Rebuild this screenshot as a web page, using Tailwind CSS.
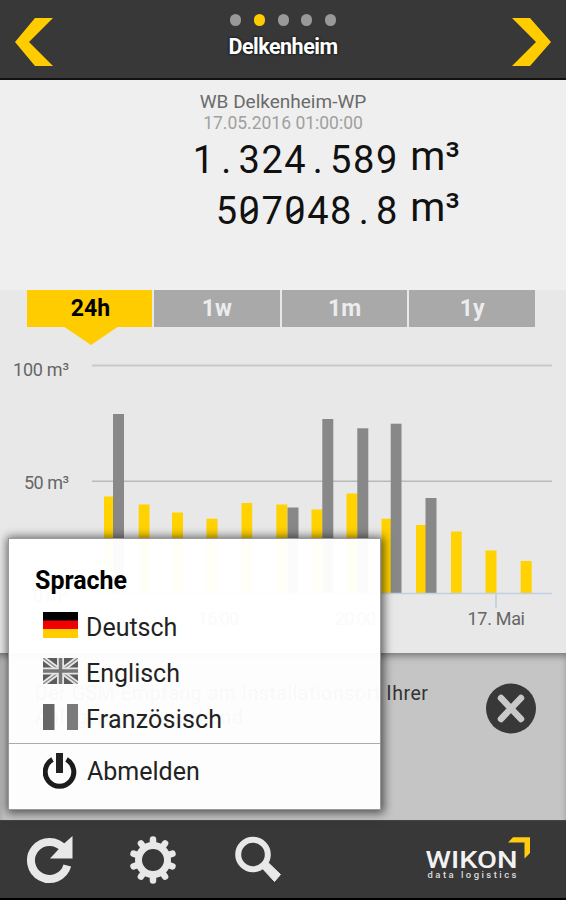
<!DOCTYPE html>
<html lang="de">
<head>
  <meta charset="UTF-8" />
  <meta name="viewport" content="width=device-width, initial-scale=1.0"/>
  <title>Delkenheim</title>
  <script src="https://cdn.jsdelivr.net/npm/@tailwindcss/browser@4"></script>
</head>
<body class="bg-[#383838] font-['Roboto',sans-serif]">
<div class="relative w-[566px] h-[900px] flex flex-col overflow-hidden">

  <!-- Header -->
  <header class="h-[80px] shrink-0 bg-[#383838] border-b-2 border-[#111] flex justify-between px-[15px]">
    <svg class="w-[39px] h-[48px] mt-[18px]" viewBox="0 0 39 48"><path d="M20 0H38L14 24L38 48H20L0 24Z" fill="#fc0"/></svg>
    <div class="flex flex-col items-center">
      <div class="flex gap-[12.6px] mt-[14px]">
        <span class="w-[11px] h-[12px] rounded-full bg-[#999]"></span>
        <span class="w-[11px] h-[12px] rounded-full bg-[#fc0]"></span>
        <span class="w-[11px] h-[12px] rounded-full bg-[#999]"></span>
        <span class="w-[11px] h-[12px] rounded-full bg-[#999]"></span>
        <span class="w-[11px] h-[12px] rounded-full bg-[#999]"></span>
      </div>
      <h1 class="mt-[7px] text-[21.5px] leading-[28px] font-bold tracking-[-0.5px] text-white [text-shadow:0_0_3px_#000]">Delkenheim</h1>
    </div>
    <svg class="w-[39px] h-[48px] mt-[18px]" viewBox="0 0 39 48"><path d="M0 0H18L39 24L18 48H0L24 24Z" fill="#fc0"/></svg>
  </header>

  <!-- Zählerstand -->
  <section class="h-[210px] shrink-0 bg-[#efefef] flex flex-col items-center">
    <p class="mt-[11px] text-[19px] leading-[22px] text-[#6b6b6b]">WB Delkenheim-WP</p>
    <p class="text-[17.5px] leading-[20px] text-[#a0a0a0]">17.05.2016 01:00:00</p>
    <div class="self-start ml-[191px] w-[269px] mt-[2px] text-[38px] leading-[51px] text-[#111]">
      <div class="flex justify-between">
        <div class="counter flex w-[207px] justify-end" data-value="1.324.589"></div>
        <span class="relative top-[-4px] text-[40px]">m³</span>
      </div>
      <div class="flex justify-between">
        <div class="counter flex w-[207px] justify-end" data-value="507048.8"></div>
        <span class="relative top-[-4px] text-[40px]">m³</span>
      </div>
    </div>
  </section>

  <!-- Diagramm -->
  <section class="h-[363px] shrink-0 bg-[#e8e8e8]">
    <div class="flex gap-[2px] ml-[27px] w-[508px] h-[37px] text-[23px] leading-[37px] font-bold text-center text-[#ececec]">
      <div class="relative w-[125px] pl-[2px] bg-[#fc0] text-black">24h
        <svg class="absolute left-[36px] top-[36px] w-[56px] h-[19px]" viewBox="0 0 56 19"><path d="M0 0H56L28 19Z" fill="#fc0"/></svg>
      </div>
      <div class="flex-1 bg-[#a9a9a9]">1w</div>
      <div class="flex-1 bg-[#a9a9a9]">1m</div>
      <div class="flex-1 bg-[#a9a9a9]">1y</div>
    </div>
    <svg class="block w-[566px] h-[326px]" viewBox="0 327 566 326" font-size="18" fill="#666">
      <path d="M92 365.5H552" stroke="#c9c9c9" stroke-width="2.2"/>
      <path d="M92 481.3H552" stroke="#b9b9b9" stroke-width="1.5"/>
      <text x="13" y="375.5" textLength="56">100 m³</text>
      <text x="24" y="488.5" textLength="45">50 m³</text>
      <text x="33" y="602" textLength="35">0 m³</text>
      <g id="bars"></g>
      <path d="M92 593.5H552M496 593V608" stroke="#c0d0e0" stroke-width="1.7" fill="none"/>
      <text x="198" y="625" textLength="41">16:00</text>
      <text x="335" y="625" textLength="41">20:00</text>
      <text x="467.5" y="625" textLength="57.5">17. Mai</text>
    </svg>
  </section>

  <!-- Meldung -->
  <section class="h-[167px] shrink-0 bg-[#c5c5c5] shadow-[inset_0_5px_7px_-2px_#777] flex justify-between pl-[35px] pr-[30px]">
    <p class="w-[410px] mt-[29px] text-[19.5px] leading-[24px] text-[#333] whitespace-nowrap tracking-[0.52px]">Der GSM Empfang am Installationsort Ihrer<br>Anlage ist ausreichend</p>
    <svg class="w-[50px] h-[51px] mt-[30px]" viewBox="0 0 50 51"><circle cx="25" cy="25.5" r="25" fill="#383838"/><path d="M15 15L35 36M35 15L15 36" stroke="#c9c9c9" stroke-width="6.5" stroke-linecap="round"/></svg>
  </section>

  <!-- Footer -->
  <footer class="h-[80px] shrink-0 bg-[#383838] border-t border-[#444] border-b-2 border-b-black flex items-start">
    <svg class="w-[48px] h-[52px] ml-[26px] mt-[14px]" viewBox="26 835 48 52">
      <path d="M67.300 865.500A18.500 18.500 0 1 1 64 849" fill="none" stroke="#e8e8e8" stroke-width="8"/>
      <path d="M72.500 836V858.500H50L63 844.500Z" fill="#e8e8e8"/>
    </svg>
    <svg class="w-[48px] h-[52px] ml-[55px] mt-[14px]" viewBox="-24 -25 48 52">
      <g id="teeth" stroke="#e8e8e8" stroke-width="6.500" stroke-linecap="round"></g>
      <circle r="14.500" fill="none" stroke="#e8e8e8" stroke-width="7"/>
    </svg>
    <svg class="w-[48px] h-[52px] ml-[57px] mt-[14px]" viewBox="234 835 48 52">
      <path d="M262 868L268 862.500L280.500 874.500L274.500 881.500Z" fill="#e8e8e8" stroke="#e8e8e8" stroke-linejoin="round"/>
      <circle cx="253" cy="854.500" r="14.800" fill="none" stroke="#e8e8e8" stroke-width="6"/>
    </svg>
    <svg class="w-[110px] h-[52px] ml-[142px] mt-[14px]" viewBox="424 835 110 52">
      <path d="M508 842.500L513 837.300H530V853L524.500 858.500V842.500Z" fill="#fc1"/>
      <text x="425.500" y="867.500" font-size="24" font-weight="500" textLength="92" lengthAdjust="spacingAndGlyphs" fill="#f2f2f2">WIKON</text>
      <text x="427.500" y="878" font-size="9.500" font-weight="500" textLength="89" fill="#ddd">data logistics</text>
    </svg>
  </footer>

  <!-- Menü -->
  <div class="absolute left-[8px] top-[538px] w-[373px] h-[272px] bg-white/97 border border-[#999] shadow-[1px_1px_9px_2px_rgba(0,0,0,0.6)] text-[25px] text-[#222]">
    <h2 class="ml-[26px] mt-[28px] text-[25px] leading-[28px] font-bold text-black">Sprache</h2>
    <div class="flex items-center h-[46px] mt-[9px] pl-[34px] gap-[8px]">
      <svg class="w-[35px] h-[26px] -mt-[4px]" viewBox="0 0 35 26"><path d="M0 0H35V9H0Z" fill="#000"/><path d="M0 8.500H35V17H0Z" fill="#f00000"/><path d="M0 17H35V26H0Z" fill="#fc0"/></svg>
      <span class="mt-[2px]">Deutsch</span>
    </div>
    <div class="flex items-center h-[46px] pl-[34px] gap-[8px]">
      <svg class="w-[35px] h-[26px] -mt-[4px]" viewBox="0 0 35 26">
        <path d="M0 0H35V26H0Z" fill="#5c5c5c"/>
        <path d="M0 0L35 26M35 0L0 26" stroke="#e6e6e6" stroke-width="5"/>
        <path d="M0 0L35 26M35 0L0 26" stroke="#888" stroke-width="1.300"/>
        <path d="M17.500 0V26M0 13H35" stroke="#e6e6e6" stroke-width="7"/>
        <path d="M17.500 0V26M0 13H35" stroke="#777" stroke-width="3.500"/>
      </svg>
      <span class="mt-[2px]">Englisch</span>
    </div>
    <div class="flex items-center h-[46px] pl-[34px] gap-[8px]">
      <svg class="w-[35px] h-[26px] -mt-[4px]" viewBox="0 0 35 26"><path d="M0 0H11.500V26H0Z" fill="#666"/><path d="M24 0H35V26H24Z" fill="#7b7b7b"/></svg>
      <span class="mt-[2px] tracking-[0.2px]">Französisch</span>
    </div>
    <div class="flex items-center h-[57px] pl-[34px] gap-[10px] border-t border-[#aaa] mt-px">
      <svg class="w-[34px] h-[36px] -mt-[3px]" viewBox="0 0 34 36"><path d="M9.500 6.500A14.300 14.300 0 1 0 23.500 6.500" fill="none" stroke="#1c1c1c" stroke-width="5"/><path d="M16.500 0V20" stroke="#222" stroke-width="7"/></svg>
      <span>Abmelden</span>
    </div>
  </div>
</div>

  <script>
    const ns = 'http://www.w3.org/2000/svg';
    const yellow = '#ffd200';
    const gray = '#888';

    // x, top, width, color
    const bars = [
      [104, 496.5, 9, yellow], [113, 414, 11, gray], [138.7, 504.5, 10.8, yellow],
      [172, 512.5, 11, yellow], [206.5, 518.7, 11, yellow], [241.5, 503, 10.7, yellow],
      [276.3, 504.5, 11, yellow], [287.5, 507.5, 11, gray], [311.5, 509.5, 11, yellow],
      [322.3, 419, 11, gray], [346.5, 493.5, 11, yellow], [357.3, 428.3, 11, gray],
      [381.5, 518.7, 9.5, yellow], [390.7, 423.7, 10.8, gray], [416, 525, 10, yellow],
      [425.5, 498, 11, gray], [451, 531.5, 10.7, yellow], [485.5, 550.5, 11, yellow],
      [520.7, 561, 11, yellow]
    ];
    bars.forEach(([x, y, w, color]) => {
      const r = document.createElementNS(ns, 'rect');
      r.setAttribute('x', x);
      r.setAttribute('y', y);
      r.setAttribute('width', w);
      r.setAttribute('height', 593 - y);
      r.setAttribute('fill', color);
      document.getElementById('bars').appendChild(r);
    });

    for (let i = 0; i < 10; i++) {
      const l = document.createElementNS(ns, 'line');
      l.setAttribute('y1', -16);
      l.setAttribute('y2', -20.5);
      l.setAttribute('transform', `rotate(${i * 36})`);
      document.getElementById('teeth').appendChild(l);
    }

    // fixed-width digits, zero with a slash
    document.querySelectorAll('.counter').forEach(el => {
      el.innerHTML = [...el.dataset.value].map(c => `
        <span class="relative w-[22.9px] text-center">${c}${c === '0' ? '<i class="absolute left-[5px] top-[25px] w-[13px] h-[2.5px] bg-[#111] -rotate-35"></i>' : ''}</span>
      `).join('');
    });
  </script>

</body>
</html>
